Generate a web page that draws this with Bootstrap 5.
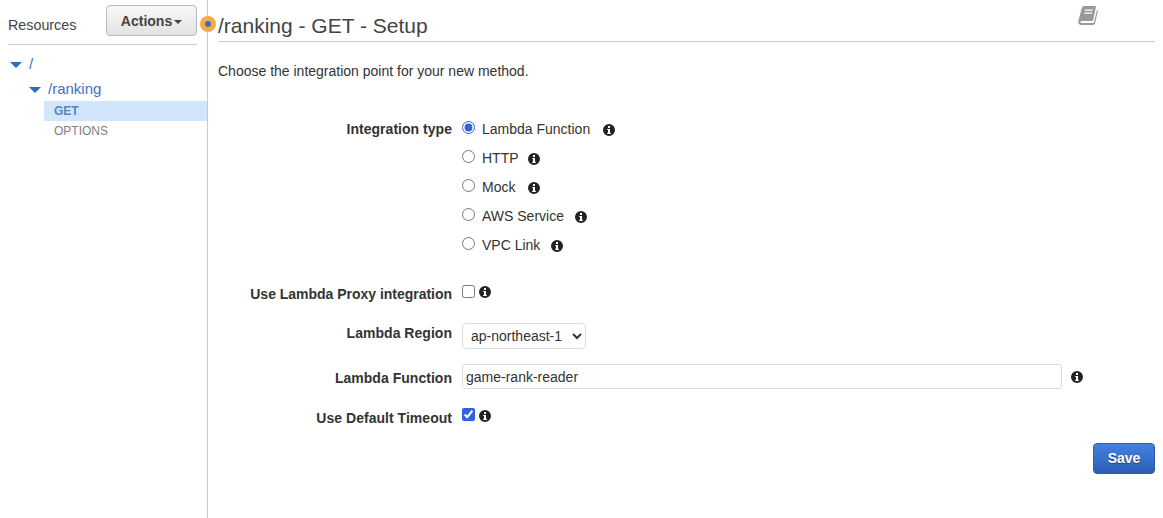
<!DOCTYPE html>
<html lang="en">
<head>
<meta charset="utf-8">
<title>/ranking - GET - Setup</title>
<link href="https://cdn.jsdelivr.net/npm/bootstrap@5.3.0/dist/css/bootstrap.min.css" rel="stylesheet">
<style>
html,body{height:518px;overflow:hidden;background:#fff}
body{font-family:"Liberation Sans",Arial,sans-serif;font-size:14px;color:#333}
.shell{height:518px}
.side{width:208px;flex:none;border-right:1px solid #c8c8c8;position:relative}
.side-head{margin:5px 10px 0 8px;height:40px;border-bottom:1px solid #ccc;padding-bottom:9px}
.side-title{font-size:14.3px;color:#444;padding-top:10px}
.act-btn{width:91px;height:31px;padding:0;font-size:14px;font-weight:700;color:#444;border:1px solid #bbb;border-radius:4px;background:linear-gradient(#f8f8f8,#e2e2e2);display:flex;align-items:center;justify-content:center;gap:2px}
.act-lab{position:relative;top:1px}
.caret-s{width:0;height:0;border-left:4px solid transparent;border-right:4px solid transparent;border-top:4px solid #444;margin-top:2px}
.caret-b{width:0;height:0;border-left:6px solid transparent;border-right:6px solid transparent;border-top:6px solid #2a6ebb;flex:none}
.tree-row{display:flex;align-items:center;font-size:15px;color:#3b73c4;height:25px;gap:7px}
.tree-a{padding-left:10px;margin-top:7px}
.tree-b{padding-left:29px}
.m-lead{margin-top:-1px}
.m-row{font-size:12px;height:20px;line-height:20px;margin-left:44px;padding-left:10px}
.m-on{background:#d1e5fb;color:#5b87c0;font-weight:700}
.m-off{color:#808080}
.pulse{position:absolute;left:200px;top:16px;width:16px;height:16px;border-radius:50%;background:#f5a94b;display:flex;align-items:center;justify-content:center;z-index:2}
.pulse-in{width:6px;height:6px;border-radius:50%;background:#3a6fc0}
.pane{flex:1;min-width:0;padding:0 8px 0 10px}
.pane-head{height:42px;border-bottom:1px solid #ccc;padding-top:12px;position:relative}
.pane-title{font-size:21px;line-height:28px;font-weight:400;color:#444;margin:0}
.book{position:absolute;left:859px;top:5px}
.intro{margin:21px 0 0;height:20px;line-height:16px;font-size:14px;color:#333}
.f-lab{width:234px;flex:none;text-align:right;font-weight:700;font-size:14px;letter-spacing:.03px;color:#333;margin-right:10px;margin-bottom:0}
.f-row{display:flex;align-items:center}
.r-row{height:29px}
.r-first{margin-top:32px}
.r-txt{font-size:14px;color:#333;margin-left:7px;margin-right:11px}
.gap-wide{margin-right:13px}
.gap-tight{margin-right:9px}
.pick{width:13px;height:13px;margin:0 0 5px 0;flex:none;accent-color:#2f62e0}
.ico{flex:none;display:block}
.ico-field{margin-left:9px}
.ico-chk{margin-left:4px;margin-bottom:5px}
.chk-shift{margin-bottom:7px}
.chk-up{margin-bottom:9px}
.row-proxy{margin-top:20px;height:29px}
.row-proxy .f-lab{letter-spacing:-.02px}
.row-region{margin-top:14px;height:26px}
.lab-up{margin-bottom:6px}
.row-fn{margin-top:15px;height:25px}
.lab-down{margin-top:3px}
.row-time{margin-top:15px;height:29px}
.row-save{margin-top:10px}
.sel-box{width:124px;height:26px;font-size:14px;color:#333;border:1px solid #ddd;border-radius:4px;background:#fff;padding:0 2px 0 4px;font-family:inherit}
.txt-box{width:600px;height:25px;font-size:14px;color:#333;border:1px solid #ddd;border-radius:3px;padding:0 3px;font-family:inherit}
.save-btn{width:62px;height:31px;padding:0;font-size:14px;font-weight:700;color:#fff;border:1px solid #2b5fae;border-radius:4px;background:linear-gradient(#4580e0,#2c5fb3);text-shadow:0 1px 1px rgba(0,0,0,.4)}
</style>
</head>
<body>
<svg width="0" height="0" class="position-absolute">
<symbol id="info" viewBox="0 0 12 12"><path fill-rule="evenodd" fill="#222" d="M6 0a6 6 0 1 1 0 12A6 6 0 0 1 6 0zM5 2v2h2V2zM4.200 5v1.100H5v2.700H4.200V10h3.600V8.800H7V5z"/></symbol>
</svg>
<div class="d-flex shell">
  <aside class="side">
    <div class="side-head d-flex justify-content-between align-items-start">
      <div class="side-title">Resources</div>
      <button type="button" class="btn act-btn"><span class="act-lab">Actions</span><span class="caret-s"></span></button>
    </div>
    <div class="tree-row tree-a"><span class="caret-b"></span><span>/</span></div>
    <div class="tree-row tree-b"><span class="caret-b"></span><span>/ranking</span></div>
    <div class="m-row m-on m-lead">GET</div>
    <div class="m-row m-off">OPTIONS</div>
    <span class="pulse"><span class="pulse-in"></span></span>
  </aside>
  <main class="pane">
    <div class="pane-head">
      <h1 class="pane-title">/ranking - GET - Setup</h1>
      <svg class="book" width="22" height="22" viewBox="0 0 22 22"><path fill="#999" d="M5 2.500Q5.300 1 7 1h11q1.200 0 .9 1.300L16.200 15q-.3 1-1.400 1H4.500q-1.400 0-1 1.300.3.800 1.300.800h11q1 0 1.300-1L20 5l1 .6-3 13q-.3 1.400-1.800 1.400H4.500Q1.600 20 1.300 17.300q-.1-.8.1-1.500z"/><path fill="#fff" d="M8 4.500h8l-.3 1.300h-8zM7.300 7.500h8l-.3 1.300H7z"/></svg>
    </div>
    <p class="intro">Choose the integration point for your new method.</p>
    <form>
      <div class="f-row r-row r-first">
        <label class="f-lab">Integration type</label>
        <input class="pick" type="radio" name="it" checked>
        <span class="r-txt gap-wide">Lambda Function</span>
        <svg class="ico" width="12" height="12"><use href="#info"/></svg>
      </div>
      <div class="f-row r-row"><span class="f-lab"></span><input class="pick" type="radio" name="it"><span class="r-txt gap-tight">HTTP</span><svg class="ico" width="12" height="12"><use href="#info"/></svg></div>
      <div class="f-row r-row"><span class="f-lab"></span><input class="pick" type="radio" name="it"><span class="r-txt gap-wide">Mock</span><svg class="ico" width="12" height="12"><use href="#info"/></svg></div>
      <div class="f-row r-row"><span class="f-lab"></span><input class="pick" type="radio" name="it"><span class="r-txt">AWS Service</span><svg class="ico" width="12" height="12"><use href="#info"/></svg></div>
      <div class="f-row r-row"><span class="f-lab"></span><input class="pick" type="radio" name="it"><span class="r-txt">VPC Link</span><svg class="ico" width="12" height="12"><use href="#info"/></svg></div>
      <div class="f-row row-proxy">
        <label class="f-lab">Use Lambda Proxy integration</label>
        <input class="pick chk-shift" type="checkbox">
        <svg class="ico ico-chk" width="12" height="12"><use href="#info"/></svg>
      </div>
      <div class="f-row row-region">
        <label class="f-lab lab-up">Lambda Region</label>
        <select class="sel-box"><option>ap-northeast-1</option></select>
      </div>
      <div class="f-row row-fn">
        <label class="f-lab lab-down">Lambda Function</label>
        <input class="txt-box" type="text" value="game-rank-reader">
        <svg class="ico ico-field" width="12" height="12"><use href="#info"/></svg>
      </div>
      <div class="f-row row-time">
        <label class="f-lab">Use Default Timeout</label>
        <input class="pick chk-up" type="checkbox" checked>
        <svg class="ico ico-chk" width="12" height="12"><use href="#info"/></svg>
      </div>
      <div class="d-flex justify-content-end row-save">
        <button type="button" class="btn save-btn">Save</button>
      </div>
    </form>
  </main>
</div>
<script src="https://cdn.jsdelivr.net/npm/bootstrap@5.3.0/dist/js/bootstrap.bundle.min.js"></script>
</body>
</html>
